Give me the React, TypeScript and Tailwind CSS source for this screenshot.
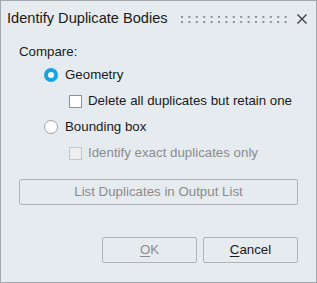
import { ReactNode } from 'react';

function Radio({ checked, label }: { checked: boolean; label: string }) {
  return (
    <div className="flex items-center h-[20px]">
      {checked ? (
        <span className="w-[14px] h-[14px] rounded-full bg-[#16a5e0] flex items-center justify-center">
          <span className="w-[6px] h-[6px] rounded-full bg-white" />
        </span>
      ) : (
        <span className="w-[14px] h-[14px] rounded-full bg-white border border-[#9ea3a8]" />
      )}
      <span className="ml-[7px] text-[#1a1a1a]">{label}</span>
    </div>
  );
}

function Check({ disabled, label }: { disabled?: boolean; label: string }) {
  return (
    <div className="flex items-center h-[20px]">
      <span
        className={
          disabled
            ? 'w-[13px] h-[13px] bg-[#eeeeee] border border-[#c4c6c8]'
            : 'w-[13px] h-[13px] bg-white border border-[#8f9397]'
        }
      />
      <span className={ `ml-[6px] ${disabled ? 'text-[#8c8c8c]' : 'text-[#1a1a1a]'}` }>{label}</span>
    </div>
  );
}

function Btn({ children, disabled, className }: { children: ReactNode; disabled?: boolean; className?: string }) {
  return (
    <div
      className={ `h-[26px] flex items-center justify-center border border-[#b0b4b8] rounded-[2px] ${disabled ? 'text-[#8c8c8c]' : 'text-[#1a1a1a]'} ${className ?? ''}` }
    >
      {children}
    </div>
  );
}

function Grip() {
  const dots = [];
  for (let i = 0; i < 15; i++) {
    dots.push(<rect key={ `a${i}` } x={ i * 7.4 } y={ 0 } width={ 2 } height={ 2 } fill="#8e9296" />);
    dots.push(<rect key={ `b${i}` } x={ i * 7.4 } y={ 5 } width={ 2 } height={ 2 } fill="#8e9296" />);
  }
  return (
    <svg width="106" height="7" className="block">
      {dots}
    </svg>
  );
}

export default function App() {
  return (
    <div className="w-[317px] h-[283px] bg-[#e5ebef] border border-[#a3a8ad] text-[13.3px] font-['Liberation_Sans',Arial,sans-serif] flex flex-col">
      <div className="flex items-center h-[36px] pl-[6px] pr-[8px]">
        <span className="text-[14.6px] text-[#1a1a1a]">Identify Duplicate Bodies</span>
        <div className="ml-auto mt-[1px]">
          <Grip />
        </div>
        <svg width="12" height="12" viewBox="0 0 12 12" className="ml-[9px]">
          <path d="M1.5 1.5 L10.5 10.5 M10.5 1.5 L1.5 10.5" stroke="#3a3a3a" strokeWidth="1.3" />
        </svg>
      </div>

      <div className="px-[18px]">
        <div className="text-[#1a1a1a] mt-[5px] h-[18px]">Compare:</div>
        <div className="pl-[25px] mt-[5px] flex flex-col">
          <Radio checked label="Geometry" />
          <div className="pl-[25px] mt-[6px]">
            <Check label="Delete all duplicates but retain one" />
          </div>
          <div className="mt-[6px]">
            <Radio checked={ false } label="Bounding box" />
          </div>
          <div className="pl-[25px] mt-[6px]">
            <Check disabled label="Identify exact duplicates only" />
          </div>
        </div>
        <Btn disabled className="mt-[16px]">List Duplicates in Output List</Btn>
        <div className="flex justify-end gap-[6px] mt-[32px]">
          <Btn disabled className="w-[95px]">
            <span><span className="underline underline-offset-2">O</span>K</span>
          </Btn>
          <Btn className="w-[95px]">
            <span><span className="underline underline-offset-2">C</span>ancel</span>
          </Btn>
        </div>
      </div>
    </div>
  );
}
